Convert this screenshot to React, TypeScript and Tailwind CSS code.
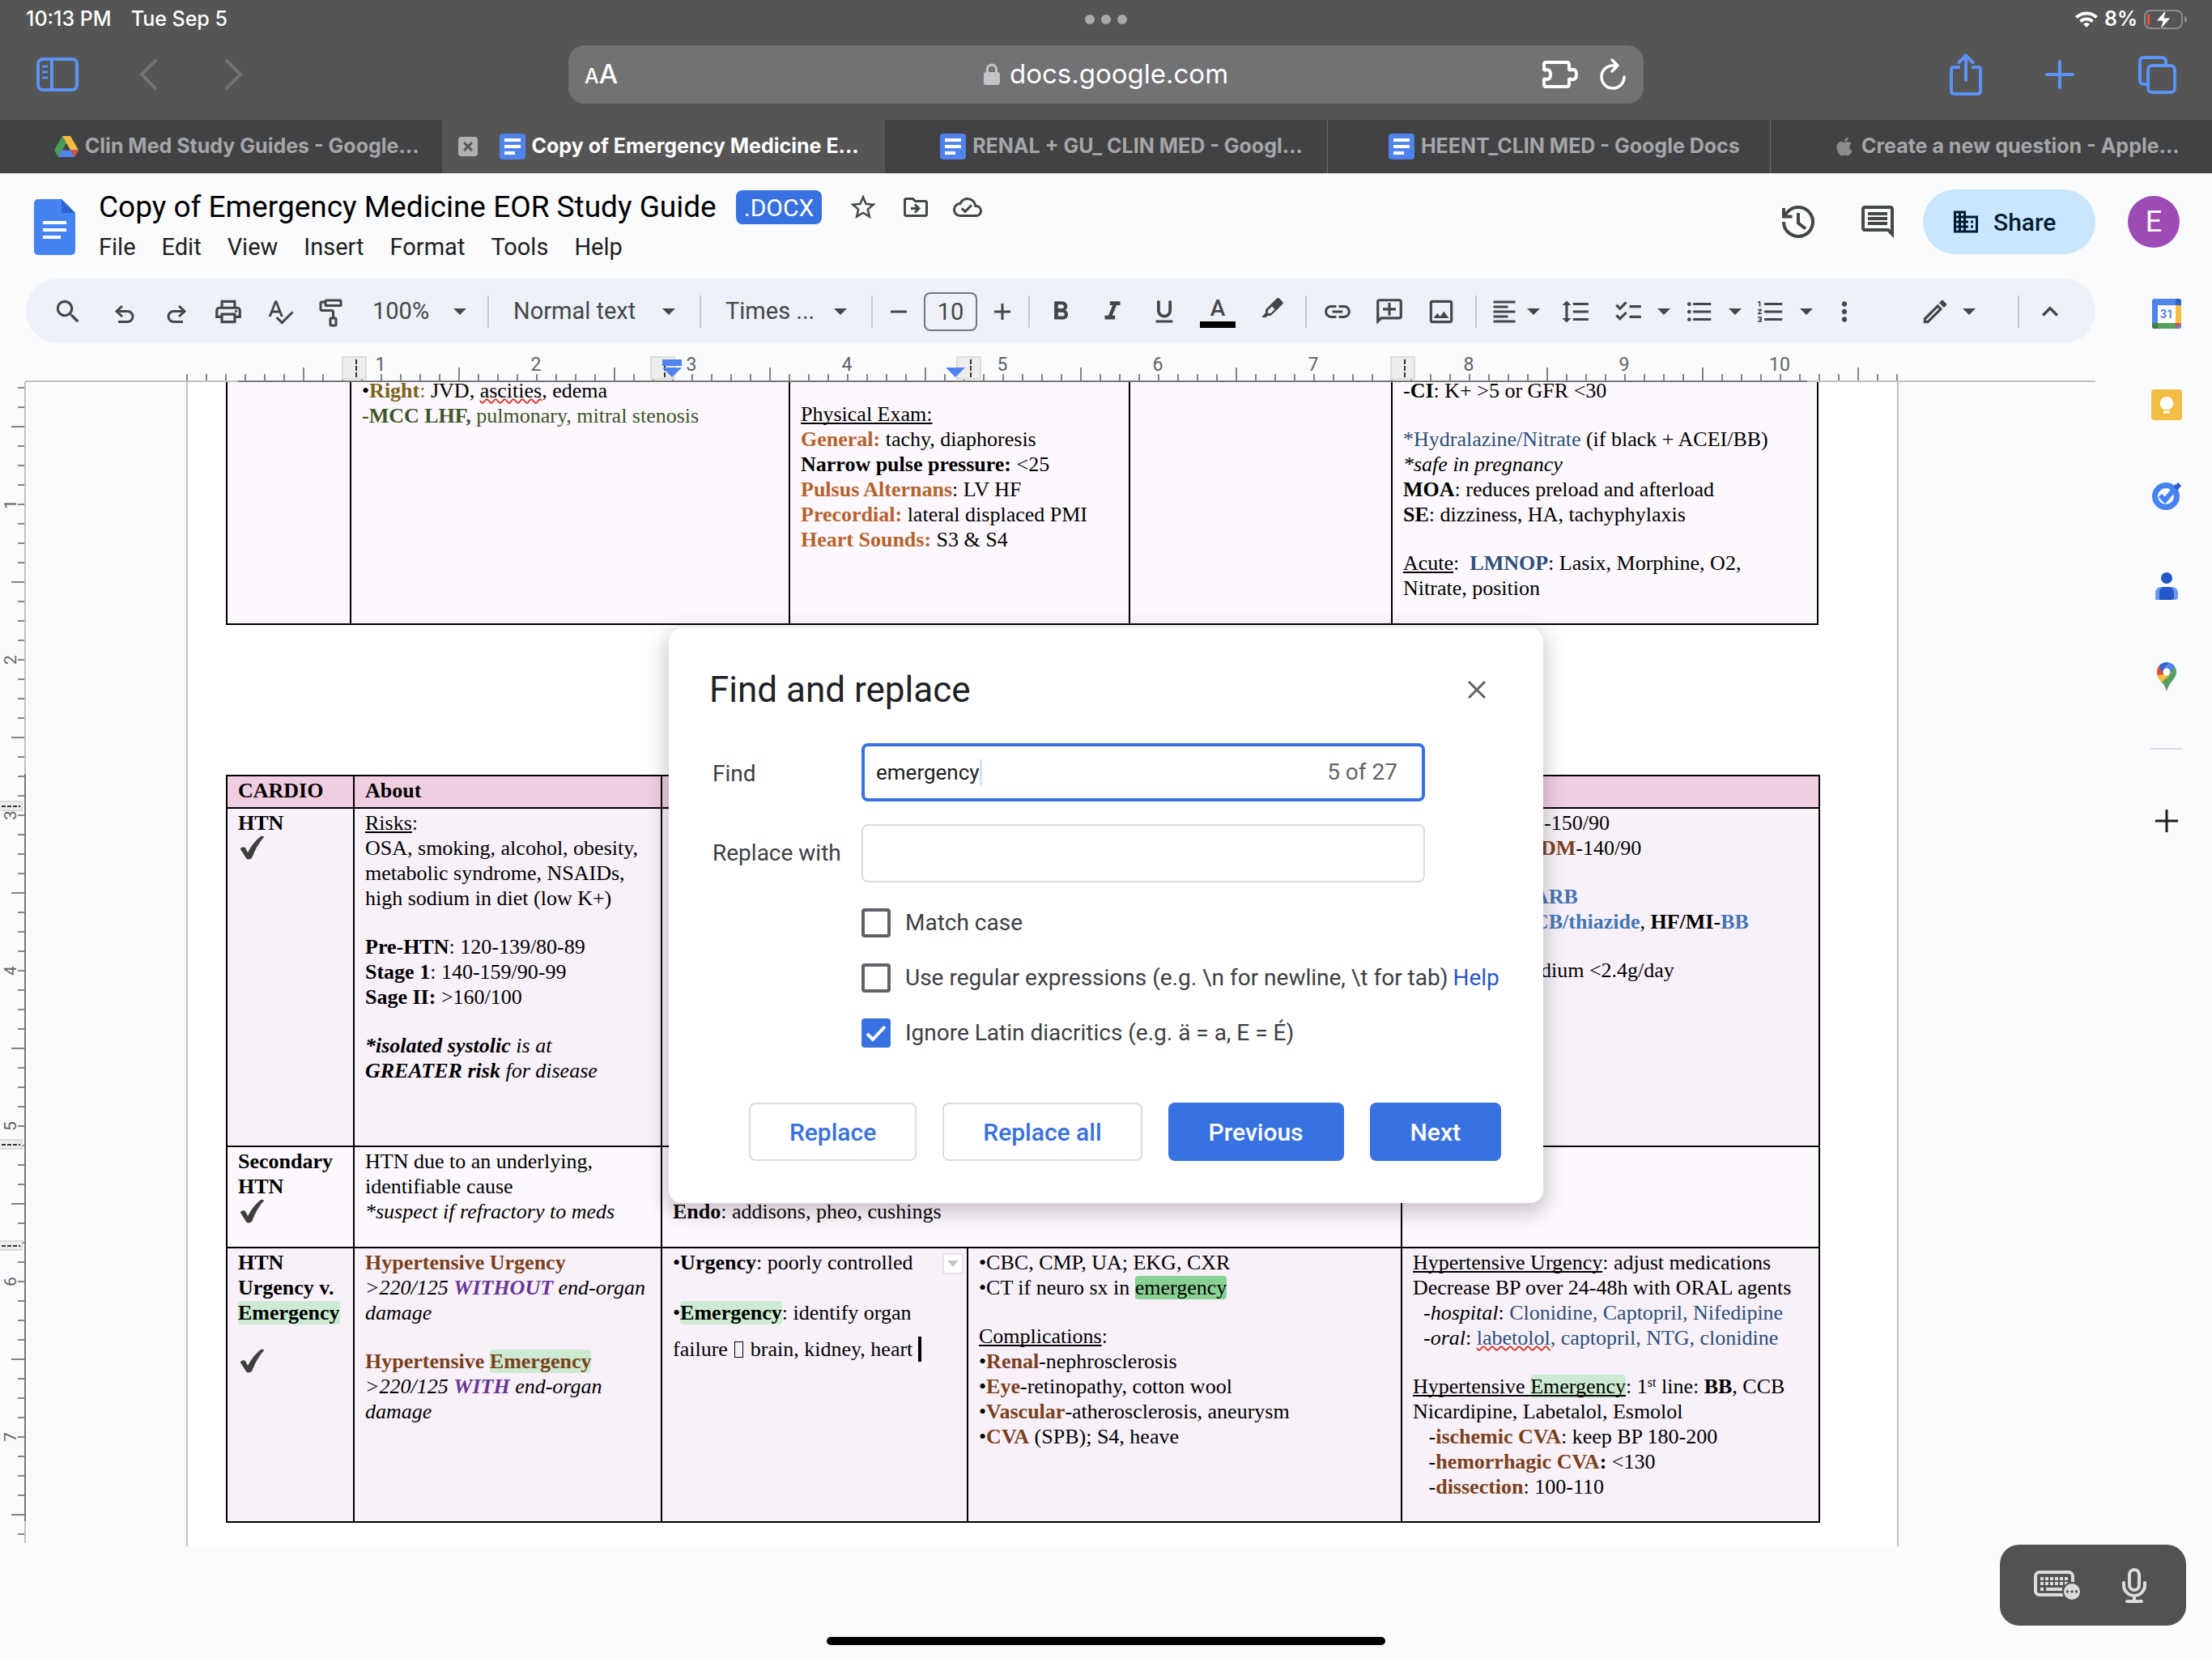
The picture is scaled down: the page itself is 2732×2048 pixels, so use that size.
import { useState } from "react";
import type { ReactNode } from "react";
import clsx from "clsx";
import {
  MdChecklist,
  MdDomain,
  MdFormatAlignLeft,
  MdFormatBold,
  MdFormatItalic,
  MdFormatLineSpacing,
  MdFormatListBulleted,
  MdFormatListNumbered,
  MdFormatUnderlined,
  MdKeyboardArrowUp,
  MdLink,
  MdMoreVert,
  MdOutlineAddComment,
  MdOutlineCloudDone,
  MdOutlineComment,
  MdOutlineDriveFileMove,
  MdOutlineEdit,
  MdOutlineImage,
  MdOutlinePrint,
  MdSearch,
  MdSpellcheck,
  MdStarBorder,
} from "react-icons/md";
import { FaApple } from "react-icons/fa";

/* ---------- small drawings ---------- */

const Caret = ({ className }: { className?: string }) => (
  <svg className={clsx("shrink-0 pointer-events-none", className)} width="16" height="8" viewBox="0 0 16 8">
    <path d="M0 0h16L8 8z" fill="#444746" />
  </svg>
);

const DocsTabIcon = () => (
  <svg width="32" height="32" viewBox="0 0 32 32" className="shrink-0">
    <rect width="32" height="32" rx="4" fill="#5083ec" />
    <path d="M6 8h20M6 16h20M6 24h13" stroke="#fff" strokeWidth="4" />
  </svg>
);

const DriveIcon = () => (
  <svg width="30" height="26" viewBox="0 0 30 26" className="shrink-0">
    <path d="M10 0 15 9 5 26 0 17.5z" fill="#4a9c58" />
    <path d="M10 0h10l10 17.5H20z" fill="#f2bd42" />
    <path d="M10 17.5h20L25 26H5z" fill="#5083ec" />
    <path d="M20 17.5h10L25 26z" fill="#d8503f" />
  </svg>
);

const DocsLogo = () => (
  <svg width="52" height="69" viewBox="0 0 52 69" className="shrink-0">
    <path d="M5 0h29l17 17v47a5 5 0 0 1-5 5H5a5 5 0 0 1-5-5V5a5 5 0 0 1 5-5z" fill="#4683f2" />
    <path d="M34 0v17h17z" fill="#2c66d3" />
    <path d="M11 29h29M11 38h29M11 47h22" stroke="#fff" strokeWidth="4" />
  </svg>
);

const UndoIcon = ({ flip }: { flip?: boolean }) => (
  <svg width="48" height="48" viewBox="0 0 48 48" fill="none" stroke="#444746" strokeWidth="3" className={clsx(flip && "-scale-x-100")}>
    <path d="m21 17-7 6.500 7 6.500M14 23.500h13.500a6.500 6.500 0 0 1 0 13H16" />
  </svg>
);

const PaintIcon = () => (
  <svg width="48" height="48" viewBox="0 0 48 48" fill="none" stroke="#444746" strokeWidth="3">
    <rect x="16" y="10" width="19" height="6.500" rx="1" />
    <path d="M16 12h-4.500q-1.500 0-1.500 1.500v7q0 2 2 2h11.500q2 0 2 2v7" />
    <rect x="22" y="32" width="7" height="9" rx="1" />
  </svg>
);

const HighlightIcon = () => (
  <svg width="48" height="48" viewBox="0 0 48 48" fill="#444746">
    <path
      fillRule="evenodd"
      d="m10 31 5-5.500v-4L28.500 8q2-2 4 0l3.200 3.200q2 2 0 4L21.500 29h-4L15.500 31zM18 22.500 23 17.500l3.500 3.500-5 5H18z"
    />
  </svg>
);

const HistoryIcon = () => (
  <svg width="48" height="48" viewBox="0 0 48 48" fill="none" stroke="#444746" strokeWidth="4">
    <path d="M6 24a18 18 0 1 0 4-11.300L6 17" />
    <path d="M6 7v10.500h10.500M24 13v12.500l9 7" />
  </svg>
);

const CalendarIcon = () => (
  <svg width="38" height="38" viewBox="0 0 38 38">
    <rect x="1" width="36" height="37" rx="3" fill="#5083ec" />
    <path d="M30 0h4q3 0 3 3v5h-7z" fill="#2f62c9" />
    <path d="M30 8h7v22h-7z" fill="#f2bd42" />
    <path d="M8 30h22v7H8z" fill="#55a05b" />
    <path d="M1 30h7v7H4q-3 0-3-3z" fill="#3c7d42" />
    <path d="M30 30h7l-7 7z" fill="#e0513f" />
    <path d="M8 8h22v22H8z" fill="#fff" />
    <text x="19" y="24" textAnchor="middle" fontSize="14" fontWeight="700" fontFamily="Roboto, sans-serif" fill="#5083ec">
      31
    </text>
  </svg>
);

const KeepIcon = () => (
  <svg width="38" height="38" viewBox="0 0 38 38">
    <rect width="38" height="38" rx="4" fill="#f2bd42" />
    <path d="M19 9a8.200 8.200 0 0 0-4 15.300V25h8v-.7A8.200 8.200 0 0 0 19 9zM15 26.500h8v3h-8z" fill="#fff" />
  </svg>
);

const TasksIcon = () => (
  <svg width="38" height="38" viewBox="0 0 38 38">
    <circle cx="18" cy="20" r="13.500" fill="none" stroke="#4683f2" strokeWidth="7" />
    <path d="m11 19 6 6L32 7" fill="none" stroke="#4683f2" strokeWidth="6" />
    <path d="m28 8 5-5 4 4-5 6z" fill="#2c5cc5" />
  </svg>
);

const ContactsIcon = () => (
  <svg width="38" height="38" viewBox="0 0 38 38">
    <circle cx="19" cy="9" r="7" fill="#2358c8" />
    <path d="M5 36v-8q0-8 8-8h12q8 0 8 8v4q0 4-4 4z" fill="#6f97f0" />
    <path d="M10 36v-8q0-8 7-8h4q7 0 7 8v4q0 4-4 4z" fill="#2358c8" />
  </svg>
);

const MapsIcon = () => (
  <svg width="38" height="38" viewBox="0 0 38 38">
    <path d="M31 13c0 9-9 12-12 24-1.500-6-4-9-6.500-12L28 5q3 3.500 3 8z" fill="#55a05b" />
    <path d="M9.500 5.500 19 13l-8.500 10Q7 18.500 7 13q0-4.500 2.500-7.500z" fill="#d8503f" />
    <path d="M9.500 5.500Q13 1 19 1l4 .7L13 13z" fill="#3565cf" />
    <path d="M23 1.700q4 1 6.300 5L20 17l-5-5z" fill="#5083ec" />
    <path d="m15 16 7 2-9.500 8Q8 21 7.600 17z" fill="#f2bd42" />
    <circle cx="19" cy="13" r="4.500" fill="#fff" />
  </svg>
);

const CheckMark = () => (
  <svg width="32" height="30" viewBox="0 0 32 30" className="ml-[1px]">
    <path
      d="M2 16q3-3 6-1l3 6Q17 9 27 1q4-1 4 1-9 10-15 26-5 3-7 0L2 17z"
      fill="#3f3f3f"
    />
  </svg>
);

/* ---------- Safari chrome ---------- */

const StatusBar = () => (
  <div className="relative flex h-12 items-center justify-between pl-8 pr-[30px] text-[25px] font-medium text-white">
    <div className="flex gap-6">
      <span>10:13 PM</span>
      <span>Tue Sep 5</span>
    </div>
    <div className="absolute left-1/2 top-1/2 flex -translate-x-1/2 -translate-y-1/2 gap-2">
      <i className="size-3 rounded-full bg-[#a9a9a9]" />
      <i className="size-3 rounded-full bg-[#a9a9a9]" />
      <i className="size-3 rounded-full bg-[#a9a9a9]" />
    </div>
    <div className="flex items-center gap-2">
      <svg width="28" height="20" viewBox="0 0 28 20" fill="none" stroke="#fff" strokeWidth="4">
        <path d="M1.500 7.500a18 18 0 0 1 25 0M6.500 12.500a11 11 0 0 1 15 0" />
        <path d="m14 20-4-4.500q4-3 8 0z" fill="#fff" stroke="none" />
      </svg>
      <span className="font-semibold">8%</span>
      <svg width="54" height="26" viewBox="0 0 54 26">
        <rect x="1" y="2" width="46" height="22" rx="7" fill="none" stroke="#8e8e8e" strokeWidth="2" />
        <path d="M50 9q3 1 3 4t-3 4z" fill="#8e8e8e" />
        <rect x="4" y="6" width="3" height="14" rx="1" fill="#eb4d3d" />
        <path d="M28 0 15 15h8l-3 11 13-15h-8z" fill="#fff" stroke="#555" strokeWidth="1" />
      </svg>
    </div>
  </div>
);

const NavBar = () => (
  <div className="grid h-[100px] grid-cols-[1fr_1328px_1fr] pt-2">
    <div className="flex h-[72px] items-center pl-11">
      <button aria-label="Show sidebar">
        <svg width="54" height="42" viewBox="0 0 54 42" fill="none" stroke="#5b92f7" strokeWidth="4">
          <rect x="3" y="2" width="48" height="38" rx="6" />
          <path d="M20 2v38" />
          <path d="M8 11h7M8 18h7M8 25h7" strokeWidth="3" />
        </svg>
      </button>
      <button aria-label="Back" className="ml-[73px]">
        <svg width="24" height="40" viewBox="0 0 24 40" fill="none" stroke="#717274" strokeWidth="4" strokeLinecap="round">
          <path d="M21 3 4 20l17 17" />
        </svg>
      </button>
      <button aria-label="Forward" className="ml-[82px]">
        <svg width="24" height="40" viewBox="0 0 24 40" fill="none" stroke="#717274" strokeWidth="4" strokeLinecap="round">
          <path d="m3 3 17 17L3 37" />
        </svg>
      </button>
    </div>
    <div className="relative flex h-[72px] items-center justify-between rounded-[20px] bg-[#717274] pl-5 pr-5 text-white">
      <button aria-label="Page settings" className="font-medium">
        <span className="text-[25px]">A</span>
        <span className="text-[33px]">A</span>
      </button>
      <button className="absolute left-1/2 flex -translate-x-1/2 items-center gap-3 text-[33px]">
        <svg width="20" height="28" viewBox="0 0 20 28">
          <path d="M4.500 12V7.500a5.500 5.500 0 0 1 11 0V12" fill="none" stroke="#c3c4ca" strokeWidth="3" />
          <rect y="11" width="20" height="16" rx="3" fill="#c3c4ca" />
        </svg>
        docs.google.com
      </button>
      <div className="flex items-center gap-6">
        <button aria-label="Extensions">
          <svg width="46" height="36" viewBox="0 0 46 36" fill="none" stroke="#fff" strokeWidth="4" strokeLinejoin="round">
            <path d="M5 3h26q3 0 3 3v6q1 1 3 0 6-1 6 6t-6 6q-2-1-3 0v6q0 3-3 3H5q-2 0-2-3v-6q1-1 3 0 5 0 5-6t-5-6q-2 1-3 0V6q0-3 2-3z" />
          </svg>
        </button>
        <button aria-label="Reload">
          <svg width="36" height="42" viewBox="0 0 36 42" fill="none" stroke="#fff" strokeWidth="3.500" strokeLinecap="round" strokeLinejoin="round">
            <path d="M32 24a14 14 0 1 1-14-14h5" />
            <path d="m17 3 7 7-7 7" />
          </svg>
        </button>
      </div>
    </div>
    <div className="flex h-[72px] items-center justify-end gap-[76px] pr-[43px]">
      <button aria-label="Share page">
        <svg width="42" height="52" viewBox="0 0 42 52" fill="none" stroke="#5b92f7" strokeWidth="4" strokeLinecap="round">
          <path d="M14 17H6q-3 0-3 3v26q0 4 4 4h28q4 0 4-4V20q0-3-3-3h-8" strokeLinecap="butt" />
          <path d="M21 33V3M12.500 11 21 2.500l8.500 8.500" />
        </svg>
      </button>
      <button aria-label="New tab">
        <svg width="38" height="38" viewBox="0 0 38 38" stroke="#5b92f7" strokeWidth="4" strokeLinecap="round">
          <path d="M19 3v32M3 19h32" />
        </svg>
      </button>
      <button aria-label="All tabs">
        <svg width="50" height="48" viewBox="0 0 50 48" fill="none" stroke="#5b92f7" strokeWidth="4">
          <rect x="14" y="13" width="33" height="33" rx="5" />
          <path d="M14 36H9q-5 0-5-5V8q0-5 5-5h22q5 0 5 5v5" />
        </svg>
      </button>
    </div>
  </div>
);

const TABS: { title: string; icon: ReactNode; active?: boolean; divided?: boolean }[] = [
  { title: "Clin Med Study Guides - Google...", icon: <DriveIcon /> },
  { title: "Copy of Emergency Medicine E...", icon: <DocsTabIcon />, active: true },
  { title: "RENAL + GU_ CLIN MED - Googl...", icon: <DocsTabIcon /> },
  { title: "HEENT_CLIN MED - Google Docs", icon: <DocsTabIcon />, divided: true },
  { title: "Create a new question - Apple...", icon: <FaApple size={26} color="#8b8b8d" />, divided: true },
];

const TabBar = () => (
  <nav className="grid h-[66px] grid-cols-5">
    {TABS.map((tab) => (
      <div
        key={tab.title}
        className={clsx(
          "flex min-w-0 items-center pl-5 pr-1.5",
          tab.active ? "bg-[#555555] text-white" : "bg-[#414244] text-[#a5a6a8]",
          tab.divided && "border-l border-[#6a6b6d]"
        )}
      >
        <span className="flex w-6 shrink-0">
          {tab.active && (
            <button aria-label="Close tab" className="flex size-6 items-center justify-center rounded-[4px] bg-[#b0b1b3]">
              <svg width="12" height="12" viewBox="0 0 12 12" stroke="#555" strokeWidth="3">
                <path d="m1 1 10 10M11 1 1 11" />
              </svg>
            </button>
          )}
        </span>
        <button className="flex flex-1 items-center justify-center gap-2 whitespace-nowrap text-[25px] font-bold">
          {tab.icon}
          {tab.title}
        </button>
      </div>
    ))}
  </nav>
);

/* ---------- Docs header and toolbar ---------- */

const MENUS = ["File", "Edit", "View", "Insert", "Format", "Tools", "Help"];

const DocsHeader = () => (
  <header className="flex h-[116px] items-start justify-between pl-[42px] pr-10 pt-5 text-[#444746]">
    <div className="flex">
      <span className="pt-3">
        <DocsLogo />
      </span>
      <div className="ml-7">
        <div className="flex h-11 items-center">
          <h1 className="text-[37px] text-black">Copy of Emergency Medicine EOR Study Guide</h1>
          <span className="ml-6 flex h-[42px] items-center rounded-lg bg-[#3871e0] px-2.5 text-[30px] text-white">.DOCX</span>
          <button aria-label="Star" className="ml-8">
            <MdStarBorder size={38} />
          </button>
          <button aria-label="Move" className="ml-7">
            <MdOutlineDriveFileMove size={36} />
          </button>
          <button aria-label="Document status" className="ml-7">
            <MdOutlineCloudDone size={36} />
          </button>
        </div>
        <nav className="mt-1 flex h-12 items-center gap-8 text-[29px] text-[#1f1f1f]">
          {MENUS.map((m) => (
            <button key={m}>{m}</button>
          ))}
        </nav>
      </div>
    </div>
    <div className="flex h-20 items-center">
      <button aria-label="Version history" className="mr-[50px]">
        <HistoryIcon />
      </button>
      <button aria-label="Comments" className="mr-8">
        <MdOutlineComment size={48} />
      </button>
      <button className="mr-10 flex h-20 w-[213px] items-center gap-4 rounded-full bg-[#c9e6fc] pl-[35px] text-[30px] font-medium text-[#001d35]">
        <MdDomain size={36} />
        Share
      </button>
      <button aria-label="Account" className="flex size-16 items-center justify-center rounded-full bg-[#9d4cb6] text-4xl text-white">
        E
      </button>
    </div>
  </header>
);

const Tool = ({ label, className = "w-16", children }: { label: string; className?: string; children: ReactNode }) => (
  <button aria-label={label} className={clsx("flex h-14 shrink-0 items-center justify-center", className)}>
    {children}
  </button>
);

const Sep = ({ className = "mx-3" }: { className?: string }) => (
  <span className={clsx("h-10 w-0.5 shrink-0 bg-[#c7c7c7]", className)} />
);

const ToolSelect = ({ label, value, className }: { label: string; value: string; className: string }) => (
  <label className={clsx("ml-[18px] flex h-14 shrink-0 items-center", className)}>
    <select aria-label={label} className="h-14 min-w-0 flex-1 appearance-none bg-transparent outline-none">
      <option>{value}</option>
    </select>
    <Caret />
  </label>
);

const Toolbar = () => (
  <div className="mx-8 mt-[14px] flex h-20 items-center rounded-full bg-[#edf1fa] pl-5 pr-6 pt-0.5 text-[29px] text-[#444746]">
    <Tool label="Search menus" className="mr-1.5 w-16">
      <MdSearch size={38} />
    </Tool>
    <Tool label="Undo">
      <UndoIcon />
    </Tool>
    <Tool label="Redo">
      <UndoIcon flip />
    </Tool>
    <Tool label="Print">
      <MdOutlinePrint size={38} />
    </Tool>
    <Tool label="Spelling and grammar check">
      <MdSpellcheck size={36} />
    </Tool>
    <Tool label="Paint format">
      <PaintIcon />
    </Tool>
    <ToolSelect label="Zoom" value="100%" className="w-[130px] pr-3.5" />
    <Sep />
    <ToolSelect label="Styles" value="Normal text" className="w-[218px] pr-[18px]" />
    <Sep />
    <ToolSelect label="Font" value="Times ..." className="w-[168px] pr-[18px]" />
    <Sep />
    <Tool label="Decrease font size" className="w-10">
      <svg width="24" height="24" viewBox="0 0 24 24">
        <path d="M2 12h20" stroke="#444746" strokeWidth="3" />
      </svg>
    </Tool>
    <input
      aria-label="Font size"
      defaultValue="10"
      className="mx-[11px] h-12 w-[66px] shrink-0 rounded-lg border-2 border-[#747775] bg-transparent text-center outline-none"
    />
    <Tool label="Increase font size" className="w-10">
      <svg width="24" height="24" viewBox="0 0 24 24">
        <path d="M2 12h20M12 2v20" stroke="#444746" strokeWidth="3" />
      </svg>
    </Tool>
    <Sep className="ml-3 mr-1.5" />
    <Tool label="Bold">
      <MdFormatBold size={38} />
    </Tool>
    <Tool label="Italic">
      <MdFormatItalic size={38} />
    </Tool>
    <Tool label="Underline">
      <MdFormatUnderlined size={36} />
    </Tool>
    <Tool label="Text color" className="w-[68px] flex-col">
      <span className="text-[28px] font-medium leading-8">A</span>
      <span className="h-2 w-11 bg-black" />
    </Tool>
    <Tool label="Highlight color" className="w-[68px]">
      <HighlightIcon />
    </Tool>
    <Sep className="mx-1.5" />
    <Tool label="Insert link">
      <MdLink size={38} />
    </Tool>
    <Tool label="Add comment">
      <MdOutlineAddComment size={38} className="-scale-x-100" />
    </Tool>
    <Tool label="Insert image">
      <MdOutlineImage size={38} />
    </Tool>
    <Sep className="mx-2.5" />
    <Tool label="Align" className="w-12">
      <MdFormatAlignLeft size={36} />
    </Tool>
    <Tool label="Align options" className="w-6">
      <Caret />
    </Tool>
    <Tool label="Line and paragraph spacing" className="w-20">
      <MdFormatLineSpacing size={38} />
    </Tool>
    <Tool label="Checklist" className="w-[50px]">
      <MdChecklist size={38} />
    </Tool>
    <Tool label="Checklist menu" className="w-[38px]">
      <Caret />
    </Tool>
    <Tool label="Bulleted list" className="w-[50px]">
      <MdFormatListBulleted size={38} />
    </Tool>
    <Tool label="Bulleted list menu" className="w-[38px]">
      <Caret />
    </Tool>
    <Tool label="Numbered list" className="w-[50px]">
      <MdFormatListNumbered size={38} />
    </Tool>
    <Tool label="Numbered list menu" className="w-[38px]">
      <Caret />
    </Tool>
    <Tool label="More" className="w-14">
      <MdMoreVert size={38} />
    </Tool>
    <Tool label="Editing mode" className="ml-auto w-16">
      <MdOutlineEdit size={38} />
    </Tool>
    <Tool label="Editing mode menu" className="w-5">
      <Caret />
    </Tool>
    <Sep className="ml-[50px] mr-1.5" />
    <Tool label="Hide the menus">
      <MdKeyboardArrowUp size={40} />
    </Tool>
  </div>
);

/* ---------- rulers ---------- */

const INCH = 192;
const STEP = INCH / 8;

const HorizontalRuler = () => (
  <svg width="100%" height="48" className="block">
    {Array.from({ length: 89 }, (_, i) => {
      const long = (i - 2) % 8 === 4;
      return <rect key={i} x={230 + i * STEP} y={long ? 30 : 38} width="2" height={long ? 16 : 8} fill="#858585" />;
    })}
    {Array.from({ length: 10 }, (_, i) => (
      <text key={i} x={470 + i * INCH} y="34" textAnchor="middle" fontSize="23" fill="#5f6368" fontFamily="Roboto, sans-serif">
        {i + 1}
      </text>
    ))}
    <rect x="31" y="46" width="2557" height="2" fill="#c0c1c2" />
    <rect x="294" y="46" width="1938" height="2" fill="#77787a" />
    {[422, 803, 1181, 1717].map((x) => (
      <g key={x}>
        <rect x={x + 1} y="17" width="29" height="27" fill="#ededed" stroke="#dcdcdc" strokeWidth="2" />
        <path d={`M${x + 18} 20v24`} stroke="#333" strokeWidth="2" strokeDasharray="6 2" />
      </g>
    ))}
    <path d="M818 20h24v8h-24zM818 30h24l-12 12z" fill="#5083ec" />
    <path d="M1168 30h24l-12 12z" fill="#5083ec" />
  </svg>
);

const VerticalRuler = () => (
  <svg width="32" height="100%" className="block shrink-0">
    {Array.from({ length: 60 }, (_, i) => {
      const long = (i + 2) % 8 === 4;
      return <rect key={i} x={long ? 14 : 22} y={6 + i * STEP} width={long ? 16 : 8} height="2" fill="#858585" />;
    })}
    {Array.from({ length: 7 }, (_, i) => (
      <text
        key={i}
        transform={`translate(20 ${151 + i * INCH}) rotate(-90)`}
        textAnchor="middle"
        fontSize="21"
        fill="#5f6368"
        fontFamily="Roboto, sans-serif"
      >
        {i + 1}
      </text>
    ))}
    <rect x="30" width="2" height="1434" fill="#c0c1c2" />
    <rect x="30" y="484" width="2" height="923" fill="#77787a" />
    {[524, 942, 1067].map((y) => (
      <g key={y}>
        <rect x="-2" y={y - 6} width="29" height="11" fill="#ededed" stroke="#dcdcdc" strokeWidth="2" />
        <path d={`M2 ${y}h23`} stroke="#333" strokeWidth="2" strokeDasharray="5 2" />
      </g>
    ))}
  </svg>
);

/* ---------- document ---------- */

const Line = ({ className, children }: { className?: string; children?: ReactNode }) => (
  <div className={clsx("whitespace-pre", className)}>{children}</div>
);

const Blank = () => <div className="h-[29px]" />;

const U = ({ children }: { children: ReactNode }) => (
  <u className="decoration-2 underline-offset-2 [text-decoration-skip-ink:none]">{children}</u>
);

const Typo = ({ children }: { children: ReactNode }) => (
  <span className="underline decoration-[#d93025] decoration-wavy decoration-2 underline-offset-1 [text-decoration-skip-ink:none]">
    {children}
  </span>
);

const Hit = ({ current, children }: { current?: boolean; children: ReactNode }) => (
  <span className={clsx("rounded-[4px]", current ? "bg-[#88d093]" : "bg-[#cdebd2]")}>{children}</span>
);

const Orange = ({ children }: { children: ReactNode }) => <b className="text-[#b5622c]">{children}</b>;
const Brown = ({ children }: { children: ReactNode }) => <b className="text-[#7b401a]">{children}</b>;
const Navy = ({ children }: { children: ReactNode }) => <span className="text-[#2d4e77]">{children}</span>;

const Cell = ({ className, span, children }: { className?: string; span?: number; children?: ReactNode }) => (
  <td colSpan={span} className={clsx("relative border-2 border-black px-[13px] py-0.5 align-top", className)}>
    {children}
  </td>
);

const HeartFailureTable = () => (
  <table className="-mt-[9px] table-fixed border-collapse bg-[#fdf8fd]">
    <colgroup>
      <col className="w-[153px]" />
      <col className="w-[542px]" />
      <col className="w-[420px]" />
      <col className="w-[324px]" />
      <col className="w-[526px]" />
    </colgroup>
    <tbody>
      <tr className="h-[307px]">
        <Cell />
        <Cell>
          <Line>
            •<b className="text-[#7d6220]">Right</b>
            <span className="text-[#7d6220]">:</span> JVD, <Typo>ascities</Typo>, edema
          </Line>
          <Line className="text-[#3c562b]">
            <b>-MCC LHF,</b> pulmonary, mitral stenosis
          </Line>
        </Cell>
        <Cell>
          <Blank />
          <Line>
            <U>Physical Exam:</U>
          </Line>
          <Line>
            <Orange>General:</Orange> tachy, diaphoresis
          </Line>
          <Line>
            <b>Narrow pulse pressure:</b> &lt;25
          </Line>
          <Line>
            <Orange>Pulsus Alternans</Orange>: LV HF
          </Line>
          <Line>
            <Orange>Precordial:</Orange> lateral displaced PMI
          </Line>
          <Line>
            <Orange>Heart Sounds:</Orange> S3 &amp; S4
          </Line>
        </Cell>
        <Cell />
        <Cell>
          <Line>
            -<b>CI</b>: K+ &gt;5 or GFR &lt;30
          </Line>
          <Blank />
          <Line>
            <Navy>*Hydralazine/Nitrate</Navy> (if black + ACEI/BB)
          </Line>
          <Line className="italic">*safe in pregnancy</Line>
          <Line>
            <b>MOA</b>: reduces preload and afterload
          </Line>
          <Line>
            <b>SE</b>: dizziness, HA, tachyphylaxis
          </Line>
          <Blank />
          <Line>
            <U>Acute</U>:{"  "}
            <Navy>
              <b>LMNOP</b>
            </Navy>
            : Lasix, Morphine, O2,
          </Line>
          <Line>Nitrate, position</Line>
        </Cell>
      </tr>
    </tbody>
  </table>
);

const CardioTable = () => (
  <table className="mt-[185px] table-fixed border-collapse bg-[#f8f1fa]">
    <colgroup>
      <col className="w-[157px]" />
      <col className="w-[380px]" />
      <col className="w-[378px]" />
      <col className="w-[536px]" />
      <col className="w-[516px]" />
    </colgroup>
    <tbody>
      <tr className="h-10 bg-[#f0cee2] font-bold">
        <Cell>CARDIO</Cell>
        <Cell>About</Cell>
        <Cell />
        <Cell />
        <Cell />
      </tr>
      <tr className="h-[418px]">
        <Cell>
          <Line>
            <b>HTN</b>
          </Line>
          <CheckMark />
        </Cell>
        <Cell>
          <Line>
            <U>Risks</U>:
          </Line>
          <Line>OSA, smoking, alcohol, obesity,</Line>
          <Line>metabolic syndrome, NSAIDs,</Line>
          <Line>high sodium in diet (low K+)</Line>
          <Blank />
          <Line>
            <b>Pre-HTN</b>: 120-139/80-89
          </Line>
          <Line>
            <b>Stage 1</b>: 140-159/90-99
          </Line>
          <Line>
            <b>Sage II:</b> &gt;160/100
          </Line>
          <Blank />
          <Line className="italic">
            <b>*isolated systolic</b> is at
          </Line>
          <Line className="italic">
            <b>GREATER risk</b> for disease
          </Line>
        </Cell>
        <Cell />
        <Cell />
        <Cell>
          <Line className="pl-[149px]">
            <Brown>o</Brown>-150/90
          </Line>
          <Line className="pl-[158px]">
            <Brown>DM</Brown>-140/90
          </Line>
          <Blank />
          <Line className="pl-[149px] font-bold text-[#4474b3]">ARB</Line>
          <Line className="pl-[149px] font-bold">
            <span className="text-[#4474b3]">CB/thiazide</span>
            <span className="font-normal">, </span>HF/MI<span className="font-normal">-</span>
            <span className="text-[#4474b3]">BB</span>
          </Line>
          <Blank />
          <Line className="pl-[158px]">dium &lt;2.4g/day</Line>
        </Cell>
      </tr>
      <tr className="h-[125px] bg-[#fdf8fd]">
        <Cell>
          <Line>
            <b>Secondary</b>
          </Line>
          <Line>
            <b>HTN</b>
          </Line>
          <CheckMark />
        </Cell>
        <Cell>
          <Line>HTN due to an underlying,</Line>
          <Line>identifiable cause</Line>
          <Line className="italic">*suspect if refractory to meds</Line>
        </Cell>
        <Cell span={2}>
          <Line className="h-[31px]" />
          <Line className="h-[31px]" />
          <Line>
            <b>Endo</b>: addisons, pheo, cushings
          </Line>
        </Cell>
        <Cell />
      </tr>
      <tr className="h-[339px]">
        <Cell>
          <Line className="font-bold">HTN</Line>
          <Line className="font-bold">Urgency v.</Line>
          <Line className="font-bold">
            <Hit>Emergency</Hit>
          </Line>
          <Blank />
          <CheckMark />
        </Cell>
        <Cell className="italic">
          <Line className="not-italic">
            <Brown>Hypertensive Urgency</Brown>
          </Line>
          <Line>
            &gt;220/125 <b className="text-[#673694]">WITHOUT</b> end-organ
          </Line>
          <Line>damage</Line>
          <Blank />
          <Line className="not-italic">
            <Brown>
              Hypertensive <Hit>Emergency</Hit>
            </Brown>
          </Line>
          <Line>
            &gt;220/125 <b className="text-[#673694]">WITH</b> end-organ
          </Line>
          <Line>damage</Line>
        </Cell>
        <Cell>
          <Line>
            •<b>Urgency</b>: poorly controlled
          </Line>
          <Line className="h-[31px]" />
          <Line>
            •
            <b>
              <Hit>Emergency</Hit>
            </b>
            : identify organ
          </Line>
          <Line className="flex items-center pt-3.5">
            failure <i className="mx-[2px] h-5 w-[11px] border border-black" /> brain, kidney, heart{" "}
            <i className="h-[31px] w-1 bg-black" />
          </Line>
          <button
            aria-label="Table options"
            className="absolute right-1 top-1.5 flex h-[26px] w-[26px] items-center justify-center border-2 border-[#e3e3e3] bg-white"
          >
            <svg width="14" height="8" viewBox="0 0 14 8">
              <path d="M0 0h14L7 8z" fill="#c6c6c6" />
            </svg>
          </button>
        </Cell>
        <Cell>
          <Line>•CBC, CMP, UA; EKG, CXR</Line>
          <Line>
            •CT if neuro sx in <Hit current>emergency</Hit>
          </Line>
          <Blank />
          <Line>
            <U>Complications</U>:
          </Line>
          <Line>
            •<Brown>Renal</Brown>-nephrosclerosis
          </Line>
          <Line>
            •<Brown>Eye</Brown>-retinopathy, cotton wool
          </Line>
          <Line>
            •<Brown>Vascular</Brown>-atherosclerosis, aneurysm
          </Line>
          <Line>
            •<Brown>CVA</Brown> (SPB); S4, heave
          </Line>
        </Cell>
        <Cell>
          <Line>
            <U>Hypertensive Urgency</U>: adjust medications
          </Line>
          <Line>Decrease BP over 24-48h with ORAL agents</Line>
          <Line>
            {"  "}-<i>hospital</i>: <Navy>Clonidine, Captopril, Nifedipine</Navy>
          </Line>
          <Line>
            {"  "}-<i>oral</i>:{" "}
            <Navy>
              <Typo>labetolol</Typo>, captopril, NTG, clonidine
            </Navy>
          </Line>
          <Blank />
          <Line>
            <U>
              Hypertensive <Hit>Emergency</Hit>
            </U>
            : 1<sup className="text-base">st</sup> line: <b>BB</b>, CCB
          </Line>
          <Line>Nicardipine, Labetalol, Esmolol</Line>
          <Line>
            {"   "}-<Brown>ischemic CVA</Brown>: keep BP 180-200
          </Line>
          <Line>
            {"   "}-<Brown>hemorrhagic CVA</Brown>
            <b>:</b> &lt;130
          </Line>
          <Line>
            {"   "}-<Brown>dissection</Brown>: 100-110
          </Line>
        </Cell>
      </tr>
    </tbody>
  </table>
);

/* ---------- find and replace ---------- */

const Option = ({ id, defaultChecked, children }: { id: string; defaultChecked?: boolean; children: ReactNode }) => (
  <div className="flex h-9 items-center gap-[18px]">
    <span className="relative flex size-9">
      <input
        id={id}
        type="checkbox"
        defaultChecked={defaultChecked}
        className="peer size-9 appearance-none rounded-[4px] border-4 border-[#5f6368] checked:border-[#3871e0] checked:bg-[#3871e0]"
      />
      <svg
        className="pointer-events-none absolute inset-0 hidden peer-checked:block"
        width="36"
        height="36"
        viewBox="0 0 36 36"
        fill="none"
        stroke="#fff"
        strokeWidth="4"
      >
        <path d="m7 19 7 7L29 10" />
      </svg>
    </span>
    <span>
      <label htmlFor={id}>{children}</label>
      {id === "regex" && (
        <a href="#help" className="ml-1.5 text-[#2a56c6]">
          Help
        </a>
      )}
    </span>
  </div>
);

const FindDialog = () => {
  const [query, setQuery] = useState("emergency");

  return (
    <section
      role="dialog"
      aria-labelledby="find-title"
      className="absolute left-1/2 top-[776px] w-[1080px] -translate-x-1/2 rounded-2xl bg-white pb-[52px] pl-[50px] pr-[52px] pt-12 text-[28px] text-[#3c4043] shadow-[0_8px_24px_4px_rgba(60,50,60,0.26)]"
    >
      <div className="flex h-14 items-center justify-between">
        <h2 id="find-title" className="text-[44px] text-[#202124]">
          Find and replace
        </h2>
        <button aria-label="Close" className="mr-0.5 flex size-14 items-center justify-center">
          <svg width="24" height="24" viewBox="0 0 24 24" stroke="#5f6368" strokeWidth="3">
            <path d="m2 2 20 20M22 2 2 22" />
          </svg>
        </button>
      </div>
      <div className="mt-[38px] grid grid-cols-[184px_696px] items-center gap-y-7 pl-1">
        <label htmlFor="find" className="pt-1">
          Find
        </label>
        <div className="flex h-[72px] items-center rounded-lg border-4 border-[#3871e0] pl-3.5 pr-[30px]">
          <input
            id="find"
            value={query}
            onChange={(e) => setQuery(e.target.value)}
            className="text-[26px] text-[#202124] outline-none [field-sizing:content]"
          />
          <span className="h-8 w-[3px] bg-[#d3e3fd]" />
          <span className="ml-auto text-[#5f6368]">5 of 27</span>
        </div>
        <label htmlFor="replace" className="whitespace-nowrap">
          Replace with
        </label>
        <input id="replace" className="h-[72px] rounded-lg border-2 border-[#dadce0] px-4 outline-none" />
      </div>
      <div className="mt-8 flex flex-col gap-8 whitespace-nowrap pl-[188px]">
        <Option id="match-case">Match case</Option>
        <Option id="regex">Use regular expressions (e.g. \n for newline, \t for tab)</Option>
        <Option id="diacritics" defaultChecked>
          Ignore Latin diacritics (e.g. ä = a, E = É)
        </Option>
      </div>
      <div className="mt-[68px] flex justify-end gap-8 text-[30px] font-medium text-[#3871e0]">
        <button className="h-[72px] rounded-lg border-2 border-[#dadce0] px-12">Replace</button>
        <button className="h-[72px] rounded-lg border-2 border-[#dadce0] px-12">Replace all</button>
        <button className="h-[72px] rounded-lg bg-[#3871e0] px-[50px] text-white">Previous</button>
        <button className="h-[72px] rounded-lg bg-[#3871e0] px-[50px] text-white">Next</button>
      </div>
    </section>
  );
};

/* ---------- side panel and system overlays ---------- */

const APPS = [
  { name: "Calendar", icon: <CalendarIcon /> },
  { name: "Keep", icon: <KeepIcon /> },
  { name: "Tasks", icon: <TasksIcon /> },
  { name: "Contacts", icon: <ContactsIcon /> },
  { name: "Maps", icon: <MapsIcon /> },
];

const SidePanel = () => (
  <aside className="flex w-28 shrink-0 flex-col items-center pt-0.5">
    {APPS.map((app) => (
      <button key={app.name} aria-label={app.name} className="flex h-28 items-center justify-center">
        {app.icon}
      </button>
    ))}
    <span className="my-8 h-0.5 w-10 bg-[#dadce0]" />
    <button aria-label="Get add-ons" className="flex h-28 items-center justify-center">
      <svg width="28" height="28" viewBox="0 0 28 28" stroke="#1f1f1f" strokeWidth="3">
        <path d="M14 0v28M0 14h28" />
      </svg>
    </button>
  </aside>
);

const KeyboardPill = () => (
  <div className="absolute bottom-10 right-8 flex h-[100px] w-[230px] items-center justify-between rounded-3xl bg-[#525252] pl-[42px] pr-12">
    <button aria-label="Keyboard">
      <svg width="58" height="38" viewBox="0 0 58 38" fill="none">
        <rect x="2" y="3" width="46" height="28" rx="5" stroke="#dcdcdc" strokeWidth="4" />
        <path d="M8 11h34M8 17h34" stroke="#dcdcdc" strokeWidth="4" strokeDasharray="4 2" />
        <path d="M8 24h4M15 24h20" stroke="#dcdcdc" strokeWidth="4" />
        <circle cx="47" cy="27" r="11" fill="#dcdcdc" stroke="#525252" strokeWidth="2" />
        <path d="M40 27h3M45.500 27h3M51 27h3" stroke="#525252" strokeWidth="3" />
      </svg>
    </button>
    <button aria-label="Dictate">
      <svg width="32" height="44" viewBox="0 0 32 44" fill="none" stroke="#dcdcdc" strokeWidth="4" strokeLinecap="round">
        <rect x="10" y="3" width="12" height="25" rx="6" />
        <path d="M3 19v3a13 13 0 0 0 26 0v-3M16 35v6M7 42h18" />
      </svg>
    </button>
  </div>
);

const App = () => {
  return (
    <div className="relative flex min-h-screen flex-col overflow-hidden bg-[#f9fbfd] font-[Roboto,sans-serif]">
      <div className="bg-[#555555] font-[Inter,sans-serif]">
        <StatusBar />
        <NavBar />
        <TabBar />
      </div>
      <DocsHeader />
      <div className="flex">
        <main className="min-w-0 flex-1">
          <Toolbar />
          <HorizontalRuler />
          <div className="flex h-[1438px] overflow-hidden">
            <VerticalRuler />
            <article className="ml-[198px] w-[2115px] shrink-0 border-x-2 border-[#c0c1c4] bg-white pl-[47px] font-['Liberation_Serif',serif] text-[26px] leading-[31px] text-black">
              <HeartFailureTable />
              <CardioTable />
            </article>
          </div>
        </main>
        <SidePanel />
      </div>
      <FindDialog />
      <KeyboardPill />
      <div className="absolute bottom-4 left-1/2 h-2.5 w-[690px] -translate-x-1/2 rounded-full bg-black" />
    </div>
  );
};

export default App;
